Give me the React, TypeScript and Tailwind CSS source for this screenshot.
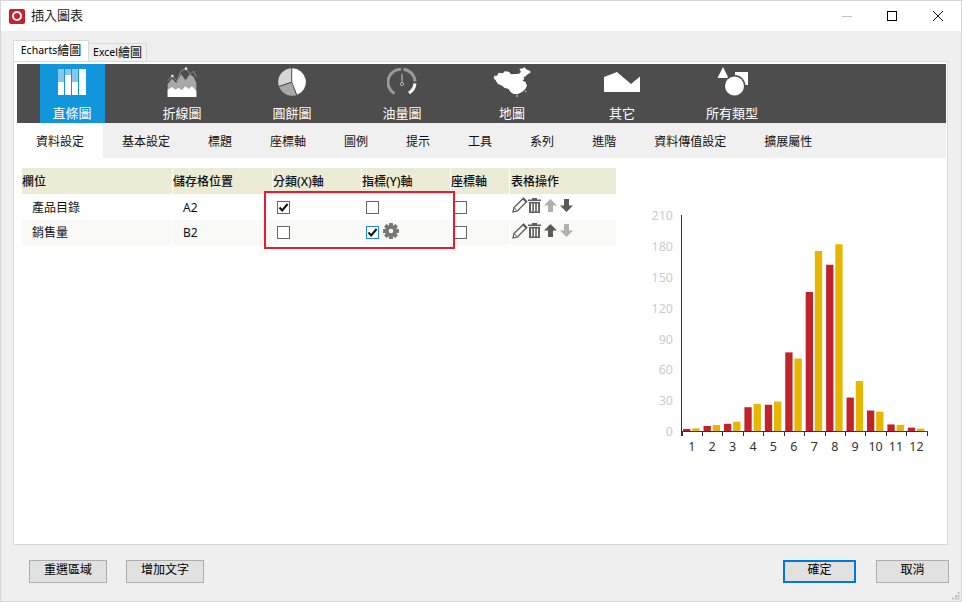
import React from "react";

const chartTabs = ["直條圖", "折線圖", "圓餅圖", "油量圖", "地圖", "其它", "所有類型"];
const subTabs = ["資料設定", "基本設定", "標題", "座標軸", "圖例", "提示", "工具", "系列", "進階", "資料傳值設定", "擴展屬性"];
const evaporation = [2, 4.9, 7, 23.2, 25.6, 76.7, 135.6, 162.2, 32.6, 20, 6.4, 3.3];
const precipitation = [2.6, 5.9, 9, 26.4, 28.7, 70.7, 175.6, 182.2, 48.7, 18.8, 6, 2.3];

function BarIcon() {
  return (
    <svg width="28" height="26" viewBox="0 0 28 26" className="block" shapeRendering="crispEdges">
      <rect x="0" y="0" width="6" height="13" fill="#87c8ea" />
      <rect x="0" y="13" width="6" height="13" fill="#fff" />
      <rect x="7" y="0" width="6" height="6" fill="#87c8ea" />
      <rect x="7" y="6" width="6" height="20" fill="#fff" />
      <rect x="14" y="0" width="6" height="13" fill="#87c8ea" />
      <rect x="14" y="13" width="6" height="13" fill="#fff" />
      <rect x="21" y="0" width="7" height="26" fill="#fff" />
    </svg>
  );
}

function LineIcon() {
  return (
    <svg width="30" height="30" viewBox="50 20 90 90" className="block">
      <polygon points="52,72 65,55 78,68 92,42 106,60 118,42 130,50 138,68 138,110 52,110" fill="#a8a8a8" />
      <polygon points="52,110 52,88 65,80 75,88 85,82 95,90 105,78 115,86 125,78 138,92 138,110" fill="#fff" />
      <polyline points="52,62 66,47 80,62 92,32 107,25 120,42 130,32 138,50" fill="none" stroke="#8a8a8a" strokeWidth="3" />
      <circle cx="66" cy="47" r="4" fill="#e8e8e8" />
      <circle cx="107" cy="25" r="4" fill="#e8e8e8" />
    </svg>
  );
}

function PieIcon() {
  return (
    <svg width="30" height="30" viewBox="-15 -15 30 30" className="block">
      <path d="M0.2 -13.8 A13.8 13.8 0 0 1 5.2 12.8 L0.2 0 Z" fill="#fff" />
      <path d="M-0.8 -13.8 A13.8 13.8 0 0 0 -13.2 4 L-0.8 -0.2 Z" fill="#d6d6d6" />
      <path d="M-12.8 5 A13.8 13.8 0 0 0 4.2 13.2 L-0.4 0.8 Z" fill="#a8a8a8" />
    </svg>
  );
}

function GaugeIcon() {
  return (
    <svg width="30" height="30" viewBox="-15 -15 30 30" className="block">
      <path d="M-7.5 11.5 A13 13 0 0 1 -1 -12.8" fill="none" stroke="#9a9a9a" strokeWidth="3" />
      <path d="M1.5 -12.8 A13 13 0 0 1 13 -0.5" fill="none" stroke="#9a9a9a" strokeWidth="3" />
      <path d="M13 1.5 A13 13 0 0 1 7 11" fill="none" stroke="#fff" strokeWidth="3" />
      <line x1="0" y1="-8" x2="0" y2="0.5" stroke="#b5b5b5" strokeWidth="1.2" />
      <circle cx="0" cy="2" r="1.6" fill="none" stroke="#b5b5b5" strokeWidth="1" />
    </svg>
  );
}

function MapIcon() {
  return (
    <svg width="38" height="30" viewBox="518 84 114 90" className="block">
      <polygon
        points="522,110 530,110 535,101 548,103 553,97 566,98 572,106 586,105 596,104 602,98 597,90 608,88 612,85 620,92 630,96 630,101 622,106 616,112 610,114 612,121 606,124 616,130 620,140 615,150 608,157 600,162 590,166 578,164 570,158 565,150 552,146 545,140 532,134 526,124 520,118"
        fill="#fff"
      />
      <circle cx="590" cy="171" r="2.5" fill="#fff" />
      <circle cx="616" cy="157" r="2" fill="#fff" />
    </svg>
  );
}

function OtherIcon() {
  return (
    <svg width="36" height="21" viewBox="0 0 36 21" className="block">
      <polygon points="0,5 13,0 27,12 36,4.5 36,20 0,20" fill="#fff" />
    </svg>
  );
}

function AllIcon() {
  return (
    <svg width="33" height="30" viewBox="0 0 33 30" className="block">
      <polygon points="7,0 1.5,11 12.5,11" fill="#fff" />
      <rect x="19" y="5" width="13" height="13" fill="#fff" />
      <circle cx="18.5" cy="19" r="11" fill="#4d4d4d" />
      <circle cx="18.5" cy="19" r="9.5" fill="#fff" />
    </svg>
  );
}

const chartIcons = [<BarIcon />, <LineIcon />, <PieIcon />, <GaugeIcon />, <MapIcon />, <OtherIcon />, <AllIcon />];

function Check({ checked, focused }: { checked?: boolean; focused?: boolean }) {
  return (
    <span
      className={`relative block h-[13px] w-[13px] shrink-0 border bg-white ${focused ? "border-[#1e8ad6]" : "border-[#666666]"}`}
    >
      {checked && (
        <svg width="11" height="11" viewBox="0 0 11 11" className="absolute left-0 top-0">
          <path d="M1.5 5.5 L4.2 8.4 L9.6 2" fill="none" stroke="#111" strokeWidth="2" />
        </svg>
      )}
    </span>
  );
}

function Pencil() {
  return (
    <svg width="16" height="16" viewBox="0 0 16 16" className="block shrink-0">
      <path d="M1 15 L2 10.5 L11.5 1.2 L14.8 4.4 L5.4 14 Z" fill="none" stroke="#555" strokeWidth="1.2" />
      <path d="M10.5 2.2 L13.8 5.4 L14.8 4.4 L11.5 1 Z" fill="#555" />
      <path d="M2 10.5 L5.4 14" stroke="#555" strokeWidth="1" />
    </svg>
  );
}

function Trash() {
  return (
    <svg width="13" height="15" viewBox="0 0 13 15" className="block shrink-0">
      <rect x="0" y="1.5" width="13" height="1.6" fill="#5f5f5f" />
      <rect x="4" y="0" width="5" height="2" fill="#5f5f5f" />
      <path d="M1 4 H12 V15 H1 Z" fill="#5f5f5f" />
      <rect x="3" y="5.5" width="1.3" height="8" fill="#fff" />
      <rect x="5.9" y="5.5" width="1.3" height="8" fill="#fff" />
      <rect x="8.8" y="5.5" width="1.3" height="8" fill="#fff" />
    </svg>
  );
}

function ArrowUp({ color }: { color: string }) {
  return (
    <svg width="13" height="13" viewBox="0 0 13 13" className="block shrink-0">
      <polygon points="6.5,0 13,6.5 9,6.5 9,13 4,13 4,6.5 0,6.5" fill={color} />
    </svg>
  );
}

function ArrowDown({ color }: { color: string }) {
  return (
    <svg width="13" height="13" viewBox="0 0 13 13" className="block shrink-0">
      <polygon points="6.5,13 13,6.5 9,6.5 9,0 4,0 4,6.5 0,6.5" fill={color} />
    </svg>
  );
}

function Gear() {
  return (
    <svg width="16" height="16" viewBox="0 0 16 16" className="block shrink-0">
      <g fill="#777">
        {[0, 45, 90, 135].map((a) => (
          <rect key={a} x="6" y="0" width="4" height="16" rx="0.5" transform={`rotate(${a} 8 8)`} />
        ))}
        <circle cx="8" cy="8" r="6" />
      </g>
      <circle cx="8" cy="8" r="2.3" fill="#f9f9f7" />
    </svg>
  );
}

function Chart() {
  const x0 = 41.5;
  const step = 20.43;
  const y0 = 231;
  const scale = 1.025;
  return (
    <svg width="300" height="260" viewBox="0 0 300 260" className="block shrink-0">
      {[0, 30, 60, 90, 120, 150, 180, 210].map((v, i) => (
        <text key={v} x="33" y={y0 + 5 - i * 30.8} textAnchor="end" fontSize="12.5" fill="#cccccc" fontFamily="'Noto Sans', sans-serif">
          {v}
        </text>
      ))}
      {evaporation.map((v, i) => (
        <rect key={i} x={x0 + step * i + 1.6} y={y0 - v * scale} width="7.3" height={v * scale} fill="#c1232b" />
      ))}
      {precipitation.map((v, i) => (
        <rect key={i} x={x0 + step * i + 10.8} y={y0 - v * scale} width="7.3" height={v * scale} fill="#e6b600" />
      ))}
      <line x1={x0} y1="15" x2={x0} y2={y0 + 5} stroke="#333" strokeWidth="1" />
      <line x1={x0} y1={y0 + 0.5} x2={x0 + step * 12} y2={y0 + 0.5} stroke="#333" strokeWidth="1" />
      {Array.from({ length: 13 }).map((_, i) => (
        <line key={i} x1={Math.round(x0 + step * i) + 0.5} y1={y0} x2={Math.round(x0 + step * i) + 0.5} y2={y0 + 5} stroke="#333" strokeWidth="1" />
      ))}
      {Array.from({ length: 12 }).map((_, i) => (
        <text key={i} x={x0 + step * i + step / 2} y="251" textAnchor="middle" fontSize="12.5" fill="#333" fontFamily="'Noto Sans', sans-serif">
          {i + 1}
        </text>
      ))}
    </svg>
  );
}

const cellBase = "flex items-center border-r border-white";

function Row({
  name,
  cell,
  rowClass,
  nameCheck,
  valueCheck,
  up,
  down,
}: {
  name: string;
  cell: string;
  rowClass: string;
  nameCheck?: boolean;
  valueCheck?: boolean;
  up: string;
  down: string;
}) {
  return (
    <div className={`grid grid-cols-[151px_100px_89px_89px_59px_1fr] ${rowClass}`}>
      <div className={`${cellBase} pl-[10px] pt-px`}>{name}</div>
      <div className={`${cellBase} pl-[10px] pt-px`}>{cell}</div>
      <div className={`${cellBase} pl-[4px]`}>
        <Check checked={nameCheck} />
      </div>
      <div className={`${cellBase} gap-[4px] pl-[4px]`}>
        <Check checked={valueCheck} focused={valueCheck} />
        {valueCheck && (
          <span className="pb-[3px]">
            <Gear />
          </span>
        )}
      </div>
      <div className={`${cellBase} pl-[3px]`}>
        <Check />
      </div>
      <div className="flex items-center pb-[4px] pl-[2px]">
        <Pencil />
        <span className="ml-0">
          <Trash />
        </span>
        <span className="ml-[3px]">
          <ArrowUp color={up} />
        </span>
        <span className="ml-[3px]">
          <ArrowDown color={down} />
        </span>
      </div>
    </div>
  );
}

function DialogButton({ label, primary, widthClass }: { label: string; primary?: boolean; widthClass: string }) {
  return (
    <button
      className={`flex h-[23px] items-center justify-center bg-[#e1e1e1] pb-[3px] text-[12px] text-black ${widthClass} ${
        primary ? "border-2 border-[#0078d7]" : "border border-[#adadad]"
      }`}
    >
      {label}
    </button>
  );
}

export default function App() {
  return (
    <div className="relative flex h-[602px] w-[962px] flex-col overflow-hidden border border-[#d6d6d6] bg-[#efefef] text-[12px] text-[#111] [font-family:'Noto_Sans','Noto_Sans_CJK_TC',sans-serif]">
      {/* title bar */}
      <div className="flex h-[30px] shrink-0 items-center bg-white pl-[8px]">
        <span className="flex h-[15px] w-[16px] items-center justify-center rounded-[2px] bg-[#c9202c]">
          <span className="block h-[10px] w-[10px] rounded-full border-[2.5px] border-white" />
        </span>
        <span className="ml-[6px] text-[13px] text-[#222]">插入圖表</span>
        <div className="ml-auto flex items-center">
          <span className="block h-px w-[10px] bg-[#c4c4c4]" />
          <span className="ml-[35px] block h-[10px] w-[10px] border border-black" />
          <svg width="10" height="10" viewBox="0 0 10 10" className="ml-[36px] mr-[18px] block">
            <path d="M0 0 L10 10 M10 0 L0 10" stroke="#111" strokeWidth="1" />
          </svg>
        </div>
      </div>

      {/* body */}
      <div className="flex flex-1 flex-col px-[12px] pt-[10px]">
        {/* document tabs */}
        <div className="flex h-[20px] items-end">
          <div className="z-10 flex h-[21px] w-[76px] items-center justify-center border border-b-0 border-[#d9d9d9] bg-white text-[12px] text-black">
            <span className="text-[10.5px]">Echarts</span>繪圖
          </div>
          <div className="flex h-[18px] w-[58px] items-center justify-center border border-b-0 border-l-0 border-[#d9d9d9] bg-[#f0f0f0] text-[12px] text-black">
            <span className="text-[10.5px]">Excel</span>繪圖
          </div>
        </div>

        {/* panel */}
        <div className="flex h-[484px] w-[935px] flex-col border border-[#d9d9d9] bg-white pl-[3px] pr-px pt-[2px]">
          <div className="flex h-[59px] shrink-0 bg-[#4d4d4d]">
            {chartTabs.map((t, i) => (
              <div key={t} className="flex w-[110px] justify-center">
                <div
                  className={`flex h-[59px] w-[65px] flex-col items-center ${i === 0 ? "bg-[#1296db]" : ""}`}
                >
                  <div className="flex h-[36px] items-center justify-center">{chartIcons[i]}</div>
                  <span className="mt-[4px] whitespace-nowrap text-[13px] leading-[18px] text-white">{t}</span>
                </div>
              </div>
            ))}
          </div>

          <div className="flex h-[35px] shrink-0 bg-[#f0f0f0]">
            {subTabs.map((t, i) => (
              <div
                key={t}
                className={`flex items-center px-[19px] pt-[2px] text-[12px] text-[#111] ${i === 0 ? "bg-white" : ""}`}
              >
                {t}
              </div>
            ))}
          </div>

          <div className="flex flex-1 pl-[5px] pt-[10px]">
            <div className="w-[594px] shrink-0">
              <div className="grid h-[26px] grid-cols-[151px_100px_89px_89px_59px_1fr] bg-[#ecebd5] pt-px font-medium text-[#111]">
                <div className={cellBase}>欄位</div>
                <div className={cellBase}>儲存格位置</div>
                <div className={cellBase}>分類(X)軸</div>
                <div className={cellBase}>指標(Y)軸</div>
                <div className={cellBase}>座標軸</div>
                <div className="flex items-center pl-px">表格操作</div>
              </div>
              <Row name="產品目錄" cell="A2" rowClass="h-[26px] bg-white" nameCheck up="#b0b0b0" down="#5a5a5a" />
              <Row name="銷售量" cell="B2" rowClass="h-[25px] bg-[#f9f9f7]" valueCheck up="#5a5a5a" down="#b0b0b0" />
            </div>
            <div className="ml-[24px] mt-[32px]">
              <Chart />
            </div>
          </div>
        </div>

        {/* footer */}
        <div className="flex items-start pl-[16px] pt-[15px]">
          <DialogButton label="重選區域" widthClass="w-[78px]" />
          <div className="ml-[19px]">
            <DialogButton label="增加文字" widthClass="w-[78px]" />
          </div>
          <div className="ml-auto">
            <DialogButton label="確定" primary widthClass="w-[73px]" />
          </div>
          <div className="ml-[20px]">
            <DialogButton label="取消" widthClass="w-[73px]" />
          </div>
        </div>
      </div>

      {/* red highlight drawn over the table */}
      <div className="absolute left-[263px] top-[190px] h-[58px] w-[191px] border-2 border-[#e81c2a]" />

      {/* resize grip */}
      <svg width="8" height="8" viewBox="0 0 8 8" className="absolute bottom-px right-px block">
        <g fill="#bdbdbd">
          <rect x="5.5" y="0" width="2" height="2" />
          <rect x="3" y="3" width="2" height="2" />
          <rect x="5.5" y="3" width="2" height="2" />
          <rect x="0" y="5.5" width="2" height="2" />
          <rect x="3" y="5.5" width="2" height="2" />
          <rect x="5.5" y="5.5" width="2" height="2" />
        </g>
      </svg>
    </div>
  );
}
